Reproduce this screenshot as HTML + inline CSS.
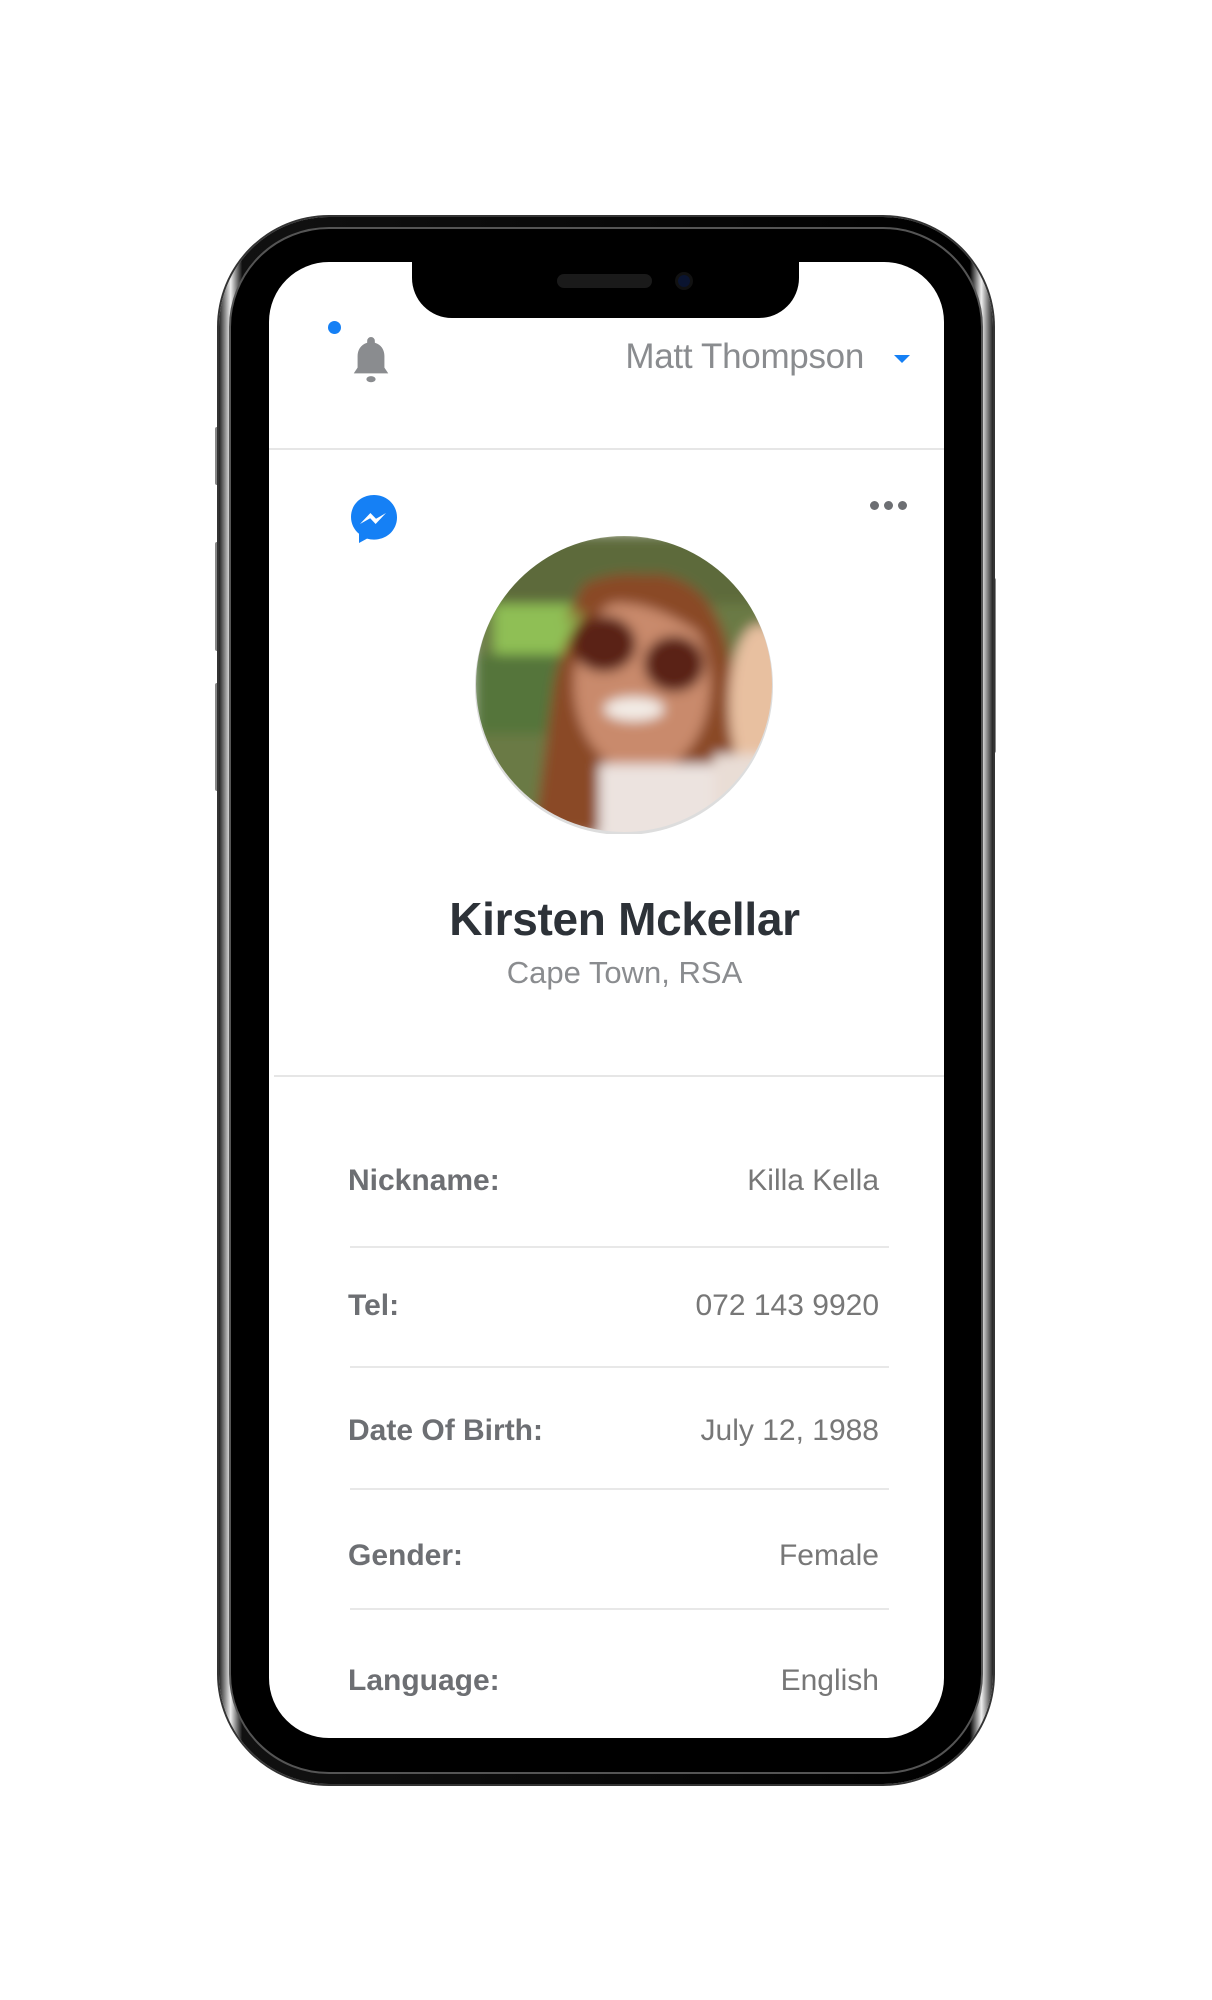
<!DOCTYPE html>
<html><head><meta charset="utf-8"><style>
*{margin:0;padding:0;box-sizing:border-box}
body{width:1212px;height:2000px;background:#fff;position:relative;overflow:hidden;font-family:"Liberation Sans",sans-serif}
.abs{position:absolute}
.phone{left:219px;top:217px;width:774px;height:1567px;border-radius:110px;background:linear-gradient(90deg,#222,#eee 1.5%,#111 3%,#000 97%,#eee 98.5%,#222);box-shadow:0 0 0 2px #333}
.inner{left:229px;top:227px;width:754px;height:1547px;border-radius:100px;background:#000;border:2px solid #555}
.screen{left:269px;top:262px;width:675px;height:1476px;border-radius:60px;background:#fff;overflow:hidden}
.btn{background:#888;width:5px;border-radius:2px}
.lbl{position:absolute;left:79px;font-size:30px;font-weight:bold;color:#6d6f73}
.val{position:absolute;right:65px;font-size:30px;color:#777}
.hr{position:absolute;left:81px;width:539px;height:2px;background:#e8e8e8}
</style></head><body>
<div class="abs btn" style="left:215px;top:427px;height:58px"></div>
<div class="abs btn" style="left:215px;top:542px;height:109px"></div>
<div class="abs btn" style="left:215px;top:683px;height:108px"></div>
<div class="abs btn" style="left:991px;top:578px;height:175px"></div>
<div class="abs phone"></div>
<div class="abs inner"></div>
<div class="abs screen">
  <div class="abs" style="left:143px;top:-10px;width:387px;height:66px;background:#000;border-radius:0 0 40px 40px"></div>
  <div class="abs" style="left:288px;top:12px;width:95px;height:14px;background:#1a1a1a;border-radius:7px"></div>
  <div class="abs" style="left:406px;top:10px;width:18px;height:18px;background:#0a1430;border-radius:50%;border:3px solid #111"></div>
  <div class="abs" style="left:59px;top:59px;width:13px;height:13px;background:#1580f5;border-radius:50%"></div>
  <svg class="abs" style="left:79px;top:73px" width="46" height="50" viewBox="0 0 24 26"><path d="M12 1a2 2 0 0 0-2 2v1C6.5 5 5 8 5 11v6l-2 3h18l-2-3v-6c0-3-1.5-6-5-7V3a2 2 0 0 0-2-2z" fill="#8a8c8f"/><ellipse cx="12" cy="23" rx="2.4" ry="1.6" fill="#8a8c8f"/></svg>
  <div class="abs" style="left:300px;top:75px;font-size:35px;color:#8a8c8f;width:295px;text-align:right;letter-spacing:-0.3px">Matt Thompson</div>
  <div class="abs" style="left:625px;top:93px;width:0;height:0;border-left:8px solid transparent;border-right:8px solid transparent;border-top:8px solid #1580f5"></div>
  <div class="abs" style="left:0;top:186px;width:675px;height:2px;background:#e6e6e6"></div>
  <svg class="abs" style="left:79px;top:231px" width="52" height="56" viewBox="0 0 26 28"><path d="M13 1C6.4 1 1.5 5.8 1.5 12c0 3.4 1.6 6.4 4 8.4V25l4-2.2c1.1.3 2.3.5 3.5.5 6.6 0 11.5-4.9 11.5-11.1S19.6 1 13 1z" fill="#1580f5"/><path d="M6 15.5l5.2-5.5 2.8 2.9 5-2.9-5.2 5.5-2.7-2.9z" fill="#fff"/></svg>
  <div class="abs" style="left:601px;top:239px;width:9px;height:9px;border-radius:50%;background:#6d6f73;box-shadow:14px 0 #6d6f73,28px 0 #6d6f73"></div>
  <svg class="abs" style="left:205px;top:272px" width="300" height="300" viewBox="0 0 300 300">
    <defs><clipPath id="c"><circle cx="150" cy="150" r="148"/></clipPath>
    <filter id="b"><feGaussianBlur stdDeviation="6"/></filter></defs>
    <circle cx="150" cy="152" r="149" fill="#ddd"/>
    <g clip-path="url(#c)"><g filter="url(#b)">
      <rect width="300" height="300" fill="#6b7a45"/>
      <rect x="0" y="0" width="300" height="70" fill="#5d6a3a"/>
      <rect x="20" y="70" width="100" height="50" fill="#8fbf55"/>
      <rect x="0" y="120" width="110" height="80" fill="#55743a"/>
      <path d="M60 300 L80 150 Q100 50 180 40 Q250 45 260 150 L270 300z" fill="#8a4a28"/>
      <ellipse cx="168" cy="150" rx="68" ry="90" fill="#c98a6c"/>
      <path d="M90 90 Q150 40 240 110 L240 80 Q180 20 110 50z" fill="#8a4a28"/>
      <ellipse cx="130" cy="110" rx="32" ry="28" fill="#5a2418"/>
      <ellipse cx="200" cy="130" rx="30" ry="28" fill="#5a2418"/>
      <ellipse cx="160" cy="175" rx="30" ry="12" fill="#f3ece6"/>
      <rect x="125" y="230" width="120" height="80" fill="#ece3df"/>
      <ellipse cx="285" cy="170" rx="30" ry="80" fill="#e8c0a0"/>
      <rect x="240" y="220" width="70" height="90" fill="#e9ddd5"/>
    </g></g>
  </svg>
  <div class="abs" style="left:18px;top:630px;width:675px;text-align:center;font-size:46px;font-weight:600;color:#2d3238;letter-spacing:-0.3px">Kirsten Mckellar</div>
  <div class="abs" style="left:18px;top:693px;width:675px;text-align:center;font-size:31px;color:#8a8c8f">Cape Town, RSA</div>
  <div class="abs" style="left:5px;top:813px;width:670px;height:2px;background:#e6e6e6"></div>
  <div class="lbl" style="top:902px">Nickname:</div><div class="val" style="top:902px">Killa Kella</div>
  <div class="hr" style="top:984px"></div>
  <div class="lbl" style="top:1027px">Tel:</div><div class="val" style="top:1027px">072 143 9920</div>
  <div class="hr" style="top:1104px"></div>
  <div class="lbl" style="top:1152px">Date Of Birth:</div><div class="val" style="top:1152px">July 12, 1988</div>
  <div class="hr" style="top:1226px"></div>
  <div class="lbl" style="top:1277px">Gender:</div><div class="val" style="top:1277px">Female</div>
  <div class="hr" style="top:1346px"></div>
  <div class="lbl" style="top:1402px">Language:</div><div class="val" style="top:1402px">English</div>
</div>
</body></html>
